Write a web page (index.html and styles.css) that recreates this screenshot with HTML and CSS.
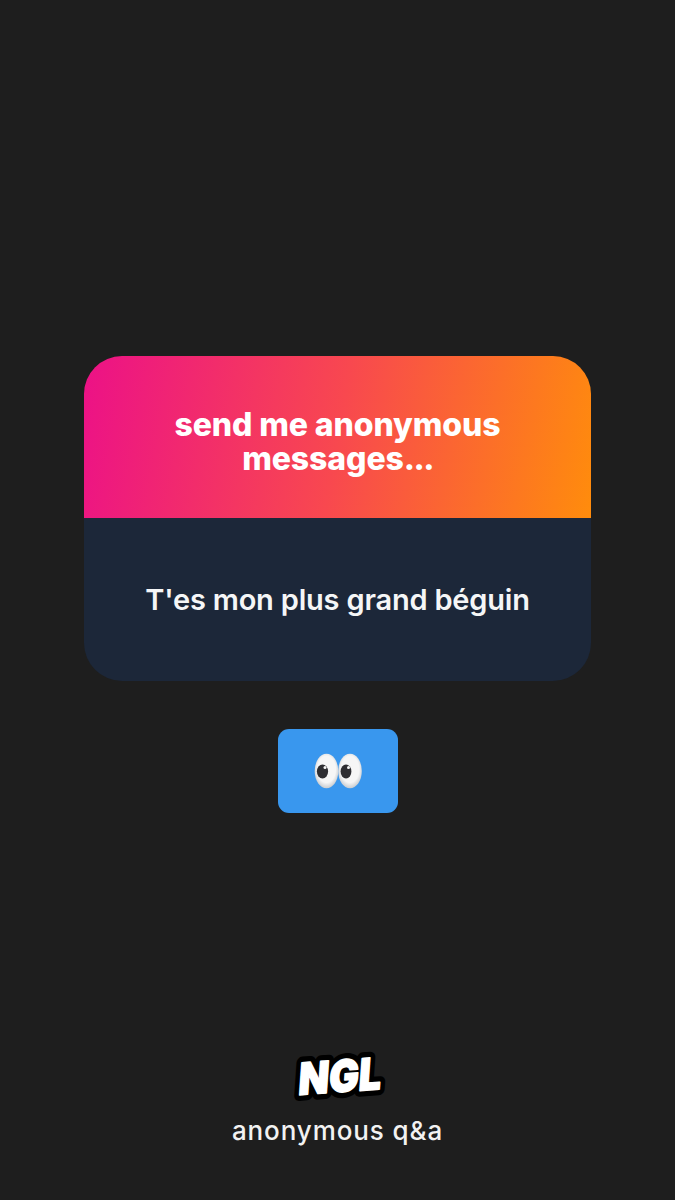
FILE: index.html
```html
<!DOCTYPE html>
<html lang="en">

<head>
    <meta charset="UTF-8">
    <meta name="viewport" content="width=device-width, initial-scale=1.0">
    <title>NGL</title>
    <link rel="stylesheet" href="styles.css">
</head>

<body>
    <main>
        <section class="card">
            <header class="card-head">
                <h1>send me anonymous<br>messages<span class="dots">...</span></h1>
            </header>
            <div class="card-body">
                <p>T'es mon plus grand béguin</p>
            </div>
        </section>

        <div class="reply">
            <svg class="eyes" width="50" height="38" viewBox="0 0 50 38" role="img" aria-label="eyes">
                <defs>
                    <radialGradient id="eyeball" cx="50%" cy="45%" r="55%">
                        <stop offset="70%" stop-color="#f6f6f6"/>
                        <stop offset="100%" stop-color="#c9ccd0"/>
                    </radialGradient>
                </defs>
                <ellipse cx="13.5" cy="19" rx="11.8" ry="17.2" fill="url(#eyeball)"/>
                <ellipse cx="37" cy="19" rx="11.8" ry="17.2" fill="url(#eyeball)"/>
                <ellipse cx="9.5" cy="19.5" rx="5.6" ry="7" fill="#2e2e32"/>
                <ellipse cx="33" cy="19.5" rx="5.4" ry="7" fill="#2e2e32"/>
                <circle cx="12" cy="15.5" r="1.5" fill="#f6f6f6"/>
                <circle cx="35.5" cy="15.5" r="1.5" fill="#f6f6f6"/>
            </svg>
        </div>

        <footer>
            <svg class="logo" width="120" height="72" viewBox="0 0 120 72" role="img" aria-label="NGL">
                <g transform="translate(62 52) rotate(-4) skewX(-8) scale(.9 1)">
                    <text class="logo-back" text-anchor="middle">NGL</text>
                    <text class="logo-front" text-anchor="middle">NGL</text>
                </g>
            </svg>
            <div class="tagline">anonymous q&amp;a</div>
        </footer>
    </main>
</body>

</html>
```

FILE: styles.css
```css
html,
body {
    margin: 0;
    background: #1e1e1e;
}

main {
    display: flex;
    flex-direction: column;
    align-items: center;
    box-sizing: border-box;
    height: 1200px;
    padding-top: 356px;
    font-family: Inter, "Liberation Sans", sans-serif;
    color: white;
}

.card {
    width: 507px;
    border-radius: 38px;
    overflow: hidden;
}

.card-head {
    display: flex;
    align-items: center;
    justify-content: center;
    box-sizing: border-box;
    height: 162px;
    padding-top: 10px;
    background: linear-gradient(100deg, #ec1187, #f8484f 50%, #ff8c0c);
}

.card-head h1 {
    margin: 0;
    font-size: 32px;
    font-weight: 800;
    line-height: 34px;
    letter-spacing: -.1px;
    text-align: center;
}

.dots {
    letter-spacing: -1.6px;
}

.card-body {
    display: flex;
    align-items: center;
    justify-content: center;
    height: 163px;
    background: #1c2739;
}

.card-body p {
    margin: 0;
    font-size: 29px;
    font-weight: 600;
    letter-spacing: -.2px;
    color: #f5f6f7;
}

.reply {
    display: flex;
    align-items: center;
    justify-content: center;
    width: 120px;
    height: 84px;
    margin-top: 48px;
    border-radius: 11px;
    background: #3997ee;
}

footer {
    display: flex;
    flex-direction: column;
    align-items: center;
    margin-top: auto;
    padding-bottom: 54px;
}

.logo text {
    font-size: 44px;
    font-weight: 900;
    stroke-linejoin: round;
}

.logo-back {
    fill: black;
    stroke: black;
    stroke-width: 12px;
}

.logo-front {
    fill: white;
    stroke: white;
    stroke-width: 1.5px;
}

.tagline {
    margin-top: 4px;
    font-size: 26px;
    font-weight: 500;
    line-height: 30px;
    letter-spacing: .9px;
    color: #f2f2f2;
}
```
